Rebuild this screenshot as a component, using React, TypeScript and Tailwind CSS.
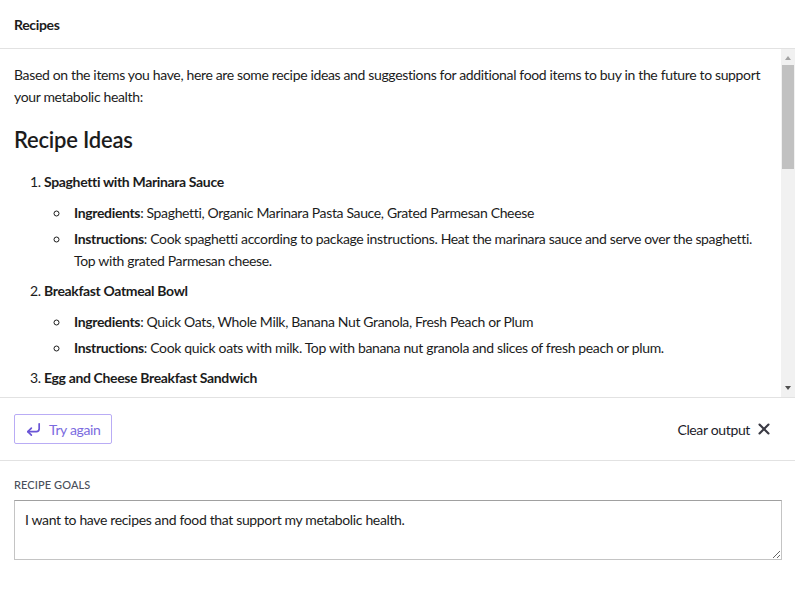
import { CornerDownLeft, X } from 'lucide-react';

const font = { fontFamily: 'Lato, "Liberation Sans", sans-serif' };

function Sub({ label, children }: { label: string; children: React.ReactNode }) {
  return (
    <li className="mt-1 first:mt-[9px] list-[circle] pl-1">
      <span className="font-bold">{label}</span>: {children}
    </li>
  );
}

const recipes = [
  {
    title: 'Spaghetti with Marinara Sauce',
    ingredients: 'Spaghetti, Organic Marinara Pasta Sauce, Grated Parmesan Cheese',
    instructions:
      'Cook spaghetti according to package instructions. Heat the marinara sauce and serve over the spaghetti. Top with grated Parmesan cheese.',
  },
  {
    title: 'Breakfast Oatmeal Bowl',
    ingredients: 'Quick Oats, Whole Milk, Banana Nut Granola, Fresh Peach or Plum',
    instructions: 'Cook quick oats with milk. Top with banana nut granola and slices of fresh peach or plum.',
  },
  {
    title: 'Egg and Cheese Breakfast Sandwich',
    ingredients: 'Large Eggs, Sliced Cheddar Cheese, Whole Wheat English Muffins',
    instructions: 'Fry or scramble the eggs. Toast the English muffin, then layer the egg and cheese inside.',
  },
  {
    title: 'Greek Yogurt Parfait',
    ingredients: 'Plain Greek Yogurt, Banana Nut Granola, Fresh Berries',
    instructions: 'Layer yogurt, granola and berries in a glass. Serve immediately.',
  },
];

const extras = [
  ['Leafy Greens', 'Spinach, kale and arugula are rich in fiber and micronutrients.'],
  ['Lean Proteins', 'Chicken breast, turkey, tofu and fish such as salmon.'],
  ['Healthy Fats', 'Avocados, olive oil, nuts and seeds.'],
  ['Whole Grains', 'Quinoa, brown rice and whole wheat pasta.'],
];

function Scrollbar() {
  return (
    <div className="absolute right-0 top-0 flex h-full w-[14px] flex-col bg-[#f1f1f1]">
      <div className="flex h-[16px] items-center justify-center pt-[2px]">
        <div className="h-0 w-0 border-x-[3.5px] border-b-[4px] border-x-transparent border-b-[#a3a3a3]" />
      </div>
      <div className="flex-1 px-[1px]">
        <div className="h-[104px] bg-[#c1c1c1]" />
      </div>
      <div className="flex h-[16px] items-center justify-center pb-[2px]">
        <div className="h-0 w-0 border-x-[3.5px] border-t-[4px] border-x-transparent border-t-[#505050]" />
      </div>
    </div>
  );
}

export default function App() {
  return (
    <div className="flex h-[601px] w-[795px] flex-col bg-white text-[14px] tracking-[-0.025em] text-[#1c1c1c]" style={font}>
      <div className="flex h-[49px] shrink-0 items-center border-b border-[#e2e2e2] px-[14px]">
        <span className="font-bold">Recipes</span>
      </div>

      <div className="relative h-[348px] shrink-0 overflow-hidden">
        <div className="pl-[14px] pr-[28px] pt-[15px] pb-6 leading-[22px]">
          <p>
            Based on the items you have, here are some recipe ideas and suggestions for additional food items to buy in
            the future to support your metabolic health:
          </p>
          <h2 className="mt-[18px] text-[22px] font-semibold leading-[28px] tracking-[-0.01em]">Recipe Ideas</h2>
          <ol className="mt-[17px] list-decimal pl-[30px]">
            {recipes.map((r, i) => (
              <li key={r.title} className={i === 0 ? 'font-normal' : 'mt-2'}>
                <span className="font-bold">{r.title}</span>
                <ul className="pl-[26px]">
                  <Sub label="Ingredients">{r.ingredients}</Sub>
                  <Sub label="Instructions">{r.instructions}</Sub>
                </ul>
              </li>
            ))}
          </ol>
          <h2 className="mt-[18px] text-[22px] font-semibold leading-[28px]">Additional Food Items to Buy</h2>
          <ul className="mt-[17px] list-disc pl-[30px]">
            {extras.map(([k, v]) => (
              <li key={k} className="mt-1">
                <span className="font-bold">{k}</span>: {v}
              </li>
            ))}
          </ul>
        </div>
        <Scrollbar />
      </div>

      <div className="flex h-[64px] shrink-0 items-center justify-between border-y border-[#e2e2e2] px-[14px]">
        <button className="flex h-[30px] items-center gap-[7px] rounded-[2px] border border-[#b9acf5] px-[10px] text-[#7b6be0]">
          <CornerDownLeft size={17} strokeWidth={2.4} className="text-[#6a55d6]" />
          <span>Try again</span>
        </button>
        <button className="mr-[8px] flex items-center gap-[5px] text-[#1c1c2a]">
          <span>Clear output</span>
          <X size={18} strokeWidth={2.8} className="text-[#3a3a44]" />
        </button>
      </div>

      <div className="px-[14px] pt-[16px]">
        <label className="block text-[11px] font-medium uppercase leading-[16px] tracking-[0.01em] text-[#4a4f5a]">
          Recipe Goals
        </label>
        <textarea
          defaultValue="I want to have recipes and food that support my metabolic health."
          className="mt-[7px] block h-[60px] w-[768px] border border-[#c4c4c4] border-t-[#a0a0a0] px-[10px] py-[8px] leading-[22px] tracking-[-0.025em] text-[#1c1c1c] outline-none"
          style={font}
        />
      </div>
    </div>
  );
}
